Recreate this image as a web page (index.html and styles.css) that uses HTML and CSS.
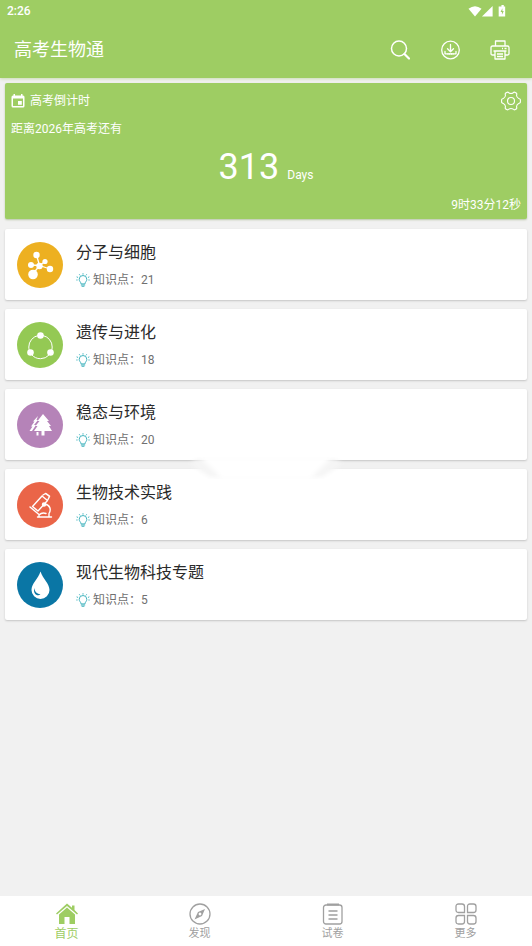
FILE: index.html
```html
<!DOCTYPE html>
<html lang="zh-CN">
<head>
<meta charset="utf-8">
<meta name="viewport" content="width=device-width, initial-scale=1">
<title>高考生物通</title>
<link rel="stylesheet" href="styles.css">
</head>
<body>
<svg width="0" height="0" class="defs" aria-hidden="true">
  <symbol id="bulb" viewBox="0 0 14 14">
    <g fill="none" stroke="currentColor" stroke-width="1" stroke-linecap="round">
      <path d="M5 10.5C5 9 3.200 8.500 3.200 6.300a3.800 3.800 0 0 1 7.600 0C10.800 8.500 9 9 9 10.500zM5.200 12h3.600M6 13.300h2"/>
      <path d="M7 .6v.6M3.500 1.600l.4.500M10.500 1.600l-.4.500M1 4l.7.300M13 4l-.7.300M.7 7h.5M13.300 7h-.5"/>
    </g>
  </symbol>
</svg>

<header class="top">
  <div class="status">
    <span>2:26</span>
    <svg width="40" height="13" viewBox="0 0 42 14" fill="#fff" aria-hidden="true">
      <path d="M0 4Q7-1.500 14 4L7 12.500z"/>
      <path d="M26 1v11.500H14.500z"/>
      <path fill-rule="evenodd" d="M34 1.500h1.500V0h2.500v1.500h1.500v11h-7v-11zM36.500 3.500L34.500 7.500H36v3l2-4h-1.500z"/>
    </svg>
  </div>
  <div class="bar">
    <h1>高考生物通</h1>
    <button type="button" aria-label="搜索">
      <svg width="20" height="20" viewBox="0 0 20 20" fill="none" stroke="#fff">
        <circle cx="9" cy="8.500" r="7.500" stroke-width="1.500"/><path d="M14.500 14l4.500 4.500" stroke-width="2.200" stroke-linecap="round"/>
      </svg>
    </button>
    <button type="button" aria-label="下载">
      <svg width="20" height="20" viewBox="0 0 20 20" fill="none" stroke="#fff" stroke-width="1.300">
        <circle cx="10.500" cy="10" r="8.800"/><path d="M10.500 4.500v7M7.500 8.800l3 3 3-3M5 11.500v2.300h11v-2.300" stroke-linecap="round" stroke-linejoin="round"/><path d="M7.500 13.800h6" stroke-width="1.800" stroke-dasharray="1 .7"/>
      </svg>
    </button>
    <button type="button" aria-label="打印">
      <svg width="20" height="20" viewBox="0 0 20 20" fill="none" stroke="#fff" stroke-width="1.300" stroke-linejoin="round">
        <path d="M5.500 6V1h9.500v5M5 15H2.500Q1 15 1 13.500v-6Q1 6 2.500 6h15Q19 6 19 7.500v6q0 1.500-1.500 1.500H15"/><path d="M3.500 11h13M5 11v8h10v-8M7 14h6M7 16.500h6M12 8.500h1M14.500 8.500h2"/>
      </svg>
    </button>
  </div>
</header>

<main>
  <section class="countdown">
    <div class="head">
      <svg width="14" height="14" viewBox="0 0 14 14" aria-hidden="true"><path fill="#fff" fill-rule="evenodd" d="M2.500 0H4v1.500h6V0h1.500v1.500H12q1.500 0 1.500 1.500v9Q13.500 13.500 12 13.500H2Q.5 13.500 .5 12V3Q.5 1.500 2 1.500h.5zM2 4.500V12h10V4.500zM7 7h3.800v3.800H7z"/></svg>
      <h2>高考倒计时</h2>
      <button type="button" aria-label="设置">
        <svg width="20" height="20" viewBox="0 0 20 20" fill="none" stroke="#fff" stroke-width="1.100" stroke-linejoin="round">
          <path d="M6.200 1.200Q7.200 1 8 2Q10 3 12 2Q12.800 1 13.800 1.200L15.600 2.300Q16 3.200 15.500 4.300Q15.700 6.600 17.700 7.500Q19 7.700 19.400 8.700V11.300Q19 12.300 17.700 12.500Q15.700 13.400 15.500 15.700Q16 16.800 15.600 17.700L13.800 18.800Q12.800 19 12 18Q10 17 8 18Q7.200 19 6.200 18.800L4.400 17.700Q4 16.800 4.500 15.700Q4.300 13.400 2.300 12.500Q1 12.300 .6 11.300V8.700Q1 7.700 2.300 7.500Q4.300 6.600 4.500 4.300Q4 3.200 4.400 2.300z"/><circle cx="10" cy="10" r="3.500"/>
        </svg>
      </button>
    </div>
    <p class="until">距离2026年高考还有</p>
    <p class="days"><strong>313</strong><span>Days</span></p>
    <p class="clock">9时33分12秒</p>
  </section>

  <div class="list">
    <a class="card" href="#molecule">
      <svg class="pic" viewBox="0 0 46 46" aria-hidden="true">
        <circle cx="23" cy="23" r="23" fill="#edb021"/>
        <g fill="#fff" stroke="#fff" stroke-width="1.300"><path d="M22.500 23.500L19.500 13M22.500 23.500L14 23M22.500 23.500L28 19.500M22.500 23.500L33 27M22.500 23.500L16 32"/>
        <g stroke="none"><circle cx="19.500" cy="13" r="3.200"/><circle cx="14" cy="23" r="3"/><circle cx="28" cy="19.500" r="2.600"/><circle cx="33" cy="27" r="3.200"/><circle cx="22.500" cy="24" r="3.200"/><circle cx="16" cy="32.500" r="4.800"/></g></g>
      </svg>
      <div><h3>分子与细胞</h3><p><svg class="bulb"><use href="#bulb"/></svg>知识点：21</p></div>
    </a>
    <a class="card" href="#heredity">
      <svg class="pic" viewBox="0 0 46 46" aria-hidden="true">
        <circle cx="23" cy="23" r="23" fill="#94c954"/>
        <circle cx="23.500" cy="25" r="11.700" fill="none" stroke="#fff" stroke-width="1" stroke-dasharray="20 4.500" stroke-dashoffset="-8.500"/>
        <g fill="#fff"><circle cx="23.500" cy="13.500" r="3.300"/><circle cx="13.500" cy="30.500" r="3.300"/><circle cx="33.500" cy="30.500" r="3.300"/></g>
      </svg>
      <div><h3>遗传与进化</h3><p><svg class="bulb"><use href="#bulb"/></svg>知识点：18</p></div>
    </a>
    <a class="card" href="#environment">
      <svg class="pic" viewBox="0 0 46 46" aria-hidden="true">
        <circle cx="23" cy="23" r="23" fill="#b583b8"/>
        <path fill="#fff" d="M26 12l6 7h-2l4 5h-2l3 5h-7.500v4.500h-3V29H17l3.500-5h-2l4-5h-2z"/>
        <path fill="#fff" d="M21 14l-5 5.500h1.500L14 24.500h1.500L12.500 29h2.500l4-6h-2l4-5h-1.500zM19.500 30h2v3.500h-2z"/>
      </svg>
      <div><h3>稳态与环境</h3><p><svg class="bulb"><use href="#bulb"/></svg>知识点：20</p></div>
    </a>
    <a class="card" href="#technology">
      <svg class="pic" viewBox="0 0 46 46" aria-hidden="true">
        <circle cx="23" cy="23" r="23" fill="#ea6548"/>
        <g fill="none" stroke="#fff" stroke-width="1.400" stroke-linejoin="round" stroke-linecap="round">
          <path d="M25 14l5.500 4.500-9.500 10.500-5.500-4.500zM26 13l2.500-1.500 4 3L31 17.500M29 11.500l3.500 2.500M13 25l9 7.500M28 22c5 1 6.500 5.500 4 9.500v3.500M22 35v-2q3-3 7-1.500M20.500 35h14"/><circle cx="27" cy="22.500" r="1.500" fill="#fff"/>
        </g>
      </svg>
      <div><h3>生物技术实践</h3><p><svg class="bulb"><use href="#bulb"/></svg>知识点：6</p></div>
    </a>
    <a class="card" href="#biotech">
      <svg class="pic" viewBox="0 0 46 46" aria-hidden="true">
        <circle cx="23" cy="23" r="23" fill="#0a76a5"/>
        <path fill="#fff" d="M23.500 9.500C26 17 32.500 21.500 32.500 28a9 9 0 0 1-18 0C14.500 21.500 21 17 23.500 9.500z"/>
        <path fill="#0a76a5" d="M17.500 26c0 4 2.500 5.500 6 6.500-3 2.500-8-1-6-6.500z"/>
      </svg>
      <div><h3>现代生物科技专题</h3><p><svg class="bulb"><use href="#bulb"/></svg>知识点：5</p></div>
    </a>
    <svg class="glow" viewBox="0 0 160 34" aria-hidden="true">
      <defs><filter id="soft"><feGaussianBlur stdDeviation="2"/></filter></defs>
      <path d="M4 13Q8 8 18 8H142Q152 8 156 13L136 26H24z" fill="#f5f5f5" filter="url(#soft)"/>
      <path d="M14 6H146L124 28H36z" fill="#fff" filter="url(#soft)"/>
    </svg>
  </div>
</main>

<nav>
  <a class="active" href="#home">
    <svg width="22" height="22" viewBox="0 0 22 22" fill="currentColor" aria-hidden="true"><path d="M11 .5L0 10.500l1 1L11 3l10 8.500 1-1L18.500 7V2.500h-2.500v2.200z"/><path d="M11 4.500L3 11.500V21h5.500v-7h5v7H19v-9.500z"/></svg>
    <span>首页</span>
  </a>
  <a href="#discover">
    <svg width="22" height="22" viewBox="0 0 22 22" aria-hidden="true"><circle cx="11" cy="11" r="10" fill="none" stroke="currentColor" stroke-width="1.300"/><path fill="currentColor" fill-rule="evenodd" d="M16 6l-3 7-7.500 3.500L9 9zM11 9.600a1.400 1.400 0 1 0 .01 0z"/></svg>
    <span>发现</span>
  </a>
  <a href="#papers">
    <svg width="22" height="22" viewBox="0 0 22 22" fill="none" stroke="currentColor" aria-hidden="true"><rect x="1.500" y="2" width="18.500" height="19" rx="2.500" stroke-width="1.300"/><path stroke-width="2" d="M5 1.500h12"/><path stroke-width="1.300" d="M6.500 8h9M6.500 12h9M6.500 16h9"/></svg>
    <span>试卷</span>
  </a>
  <a href="#more">
    <svg width="22" height="22" viewBox="0 0 22 22" fill="none" stroke="currentColor" stroke-width="1.300" aria-hidden="true"><path d="M3.500 1h3.500q2.500 0 2.500 2.500v6h-6Q1 9.500 1 7V3.500Q1 1 3.500 1zM15 1h3.500Q21 1 21 3.500V7q0 2.500-2.500 2.500h-6v-6Q12.500 1 15 1zM3.500 12.500h6v6Q9.500 21 7 21H3.500Q1 21 1 18.500V15q0-2.500 2.500-2.500zM12.500 12.500h6Q21 12.500 21 15v3.500q0 2.500-2.500 2.500H15q-2.500 0-2.500-2.500z"/></svg>
    <span>更多</span>
  </a>
</nav>
</body>
</html>
```
FILE: styles.css
```css
* { box-sizing: border-box; }
body {
  margin: 0;
  min-height: 100vh;
  display: flex;
  flex-direction: column;
  background: #f1f1f1;
  font: 12px/16px Roboto, "Noto Sans CJK SC", sans-serif;
  color: #707070;
}
h1, h2, h3, p { margin: 0; font-weight: 400; }
a { color: inherit; text-decoration: none; }
button {
  padding: 0;
  border: 0;
  background: none;
  display: flex;
}
.defs { position: absolute; }

.top {
  background: #9ecd63;
  color: #fff;
  box-shadow: 0 1px 3px #cbdcb4;
}
.status {
  height: 22px;
  display: flex;
  align-items: center;
  justify-content: space-between;
  padding: 0 24px 0 7px;
  font-weight: 500;
}
.bar {
  height: 56px;
  display: flex;
  align-items: center;
  gap: 30px;
  padding: 0 22px 0 14px;
}
.bar h1 {
  flex: 1;
  font-size: 18px;
  line-height: 24px;
}

main { flex: 1; padding: 5px; }
.countdown {
  background: #9ecd63;
  color: #fff;
  border-radius: 2px;
  box-shadow: 0 1px 2px #b9c6a8;
  padding: 8px 6px 6px;
}
.head { display: flex; align-items: center; gap: 5px; }
.head h2 { flex: 1; font-size: 12px; line-height: 20px; }
.until { padding-top: 10px; }
.days {
  display: flex;
  align-items: baseline;
  justify-content: center;
  gap: 8px;
  padding-top: 8px;
}
.days strong { font-size: 36px; line-height: 44px; font-weight: 400; }
.clock { text-align: right; padding-top: 8px; }

.list {
  position: relative;
  display: flex;
  flex-direction: column;
  gap: 9px;
  margin-top: 10px;
}
.card {
  display: flex;
  align-items: center;
  gap: 13px;
  min-height: 71px;
  padding: 0 12px;
  background: #fff;
  border-radius: 2px;
  box-shadow: 0 1px 2px #c4c4c4;
}
.pic { width: 46px; height: 46px; flex: none; }
.card h3 {
  font-size: 16px;
  line-height: 24px;
  color: #2a2a2a;
}
.card p {
  display: flex;
  align-items: center;
  gap: 3px;
  padding-top: 7px;
}
.bulb { width: 14px; height: 14px; color: #45b5bf; }
.glow {
  position: absolute;
  top: 222px;
  left: 50%;
  width: 160px;
  height: 34px;
  margin-left: -80px;
}

nav {
  display: flex;
  min-height: 50px;
  background: #fff;
  color: #a0a0a0;
}
nav a {
  flex: 1;
  display: flex;
  flex-direction: column;
  align-items: center;
  gap: 1px;
  padding-top: 7px;
  font-size: 11px;
}
nav .active { color: #9ecd63; font-size: 12px; }
```
